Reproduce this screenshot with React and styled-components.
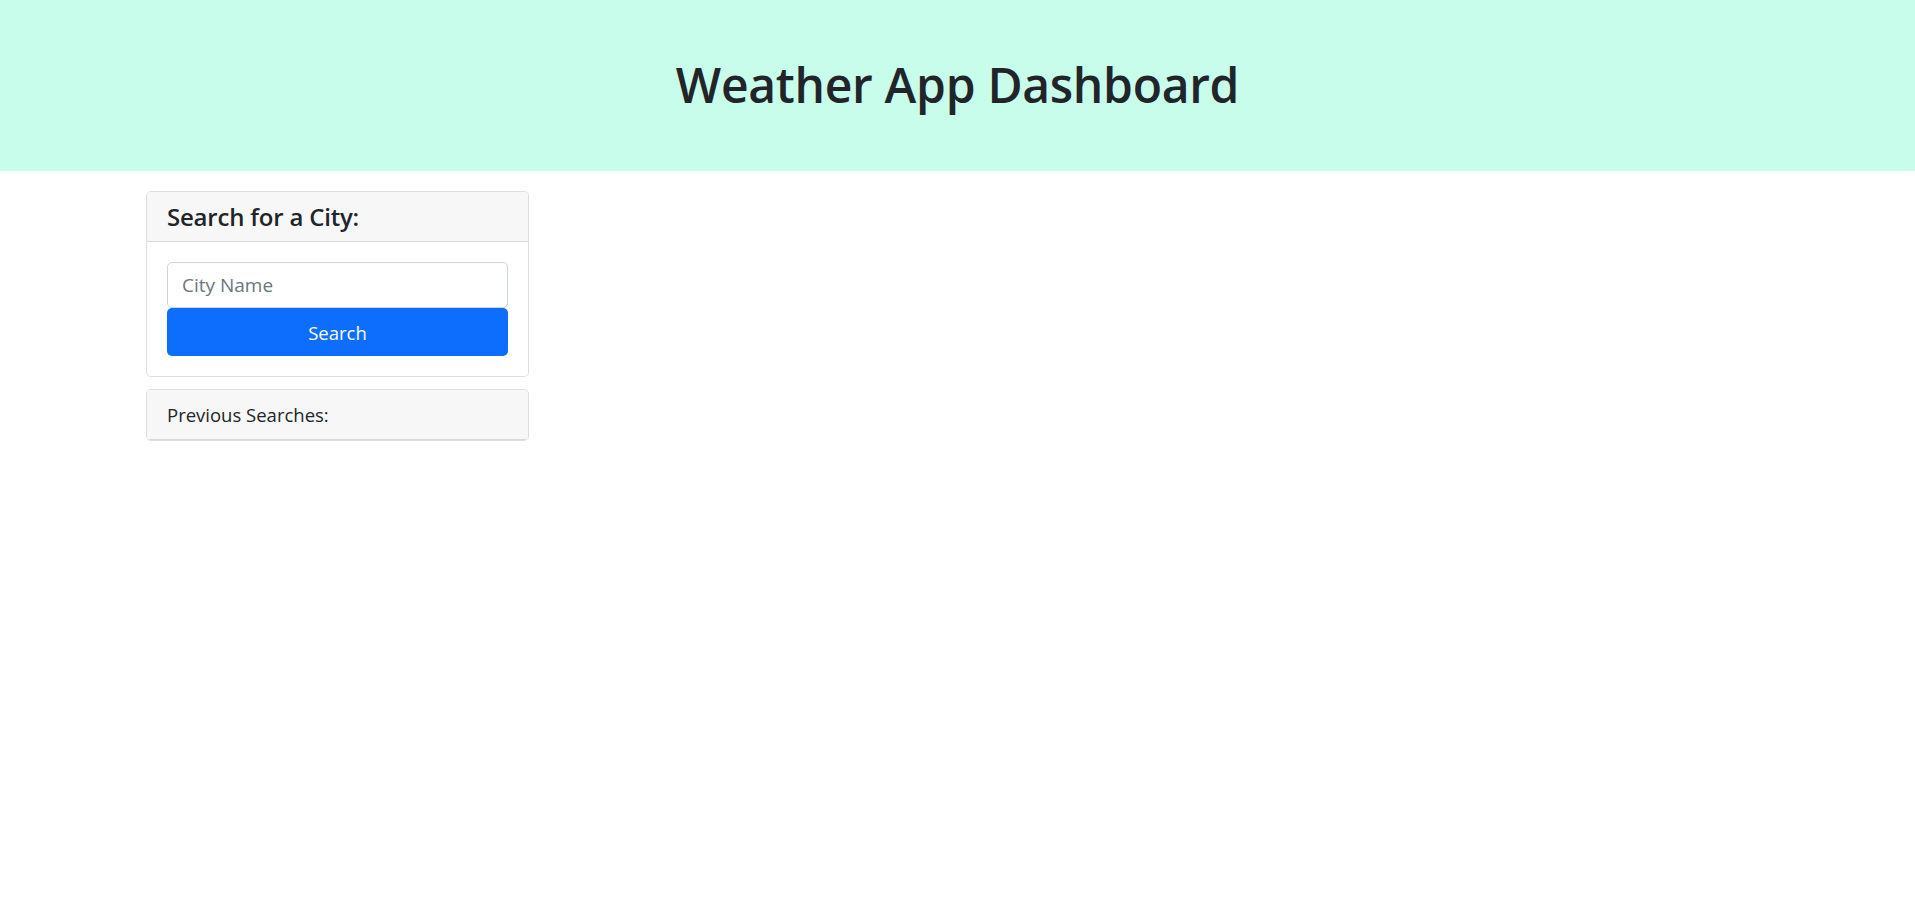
import * as React from 'react';
import styled, { createGlobalStyle } from 'styled-components';

const GlobalStyle = createGlobalStyle`
  body {
    margin: 0;
    font-family: "Open Sans", "Noto Sans", sans-serif;
    color: #212529;
    background: #fff;
  }
  * {
    box-sizing: border-box;
  }
`;

const Header = styled.header`
  height: 171px;
  background: #c8fdec;
  display: flex;
  align-items: center;
  justify-content: center;
  padding-bottom: 2px;
`;

const Title = styled.h1`
  margin: 0;
  font-size: 48px;
  font-weight: 600;
  line-height: 1.2;
  letter-spacing: -0.3px;
`;

const Main = styled.main`
  padding: 20px 0 0 146px;
`;

const Sidebar = styled.aside`
  width: 383px;
  display: flex;
  flex-direction: column;
  gap: 12px;
`;

const Card = styled.section`
  border: 1px solid rgba(0, 0, 0, 0.125);
  border-radius: 5px;
  background: #fff;
  overflow: hidden;
`;

const CardHeader = styled.div`
  background: #f7f7f7;
  padding: 10px 20px;
  border-bottom: 1px solid rgba(0, 0, 0, 0.125);
  font-size: ${(p) => (p.$big ? '24px' : '18.5px')};
  font-weight: ${(p) => (p.$big ? 600 : 400)};
  line-height: 29px;
  letter-spacing: ${(p) => (p.$big ? '-0.2px' : '0')};
`;

const CardBody = styled.form`
  padding: 20px;
  display: flex;
  flex-direction: column;
`;

const Input = styled.input`
  height: 46px;
  padding: 7px 14px;
  font-family: inherit;
  font-size: 19px;
  color: #212529;
  border: 1px solid #ced4da;
  border-radius: 5px;
  outline: none;

  &::placeholder {
    color: #6c757d;
  }
`;

const Button = styled.button`
  height: 48px;
  border: none;
  border-radius: 5px;
  background: #0d6efd;
  color: #fff;
  font-family: inherit;
  font-size: 18.5px;
  cursor: pointer;
`;

export default function App() {
  return (
    <>
      <GlobalStyle />
      <Header>
        <Title>Weather App Dashboard</Title>
      </Header>
      <Main>
        <Sidebar>
          <Card>
            <CardHeader $big>Search for a City:</CardHeader>
            <CardBody onSubmit={(e) => e.preventDefault()}>
              <Input placeholder="City Name" />
              <Button type="submit">Search</Button>
            </CardBody>
          </Card>
          <Card>
            <CardHeader>Previous Searches:</CardHeader>
          </Card>
        </Sidebar>
      </Main>
    </>
  );
}
